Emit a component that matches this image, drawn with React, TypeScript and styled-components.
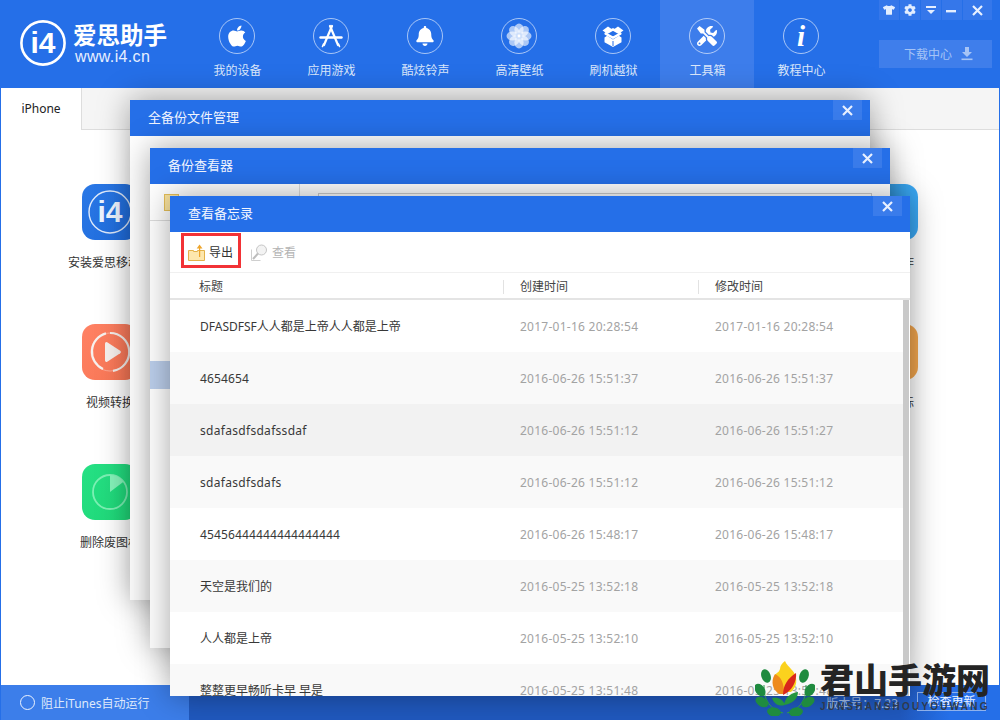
import React from "react";
import styled, { createGlobalStyle } from "styled-components";
import { FaApple, FaBell, FaTools, FaTshirt, FaCog } from "react-icons/fa";

const FONT = `"Noto Sans", "Noto Sans CJK SC", sans-serif`;
const BLUE = "#256fe8";

const Global = createGlobalStyle`
  html, body { margin: 0; padding: 0; background: #fff; }
  * { box-sizing: border-box; }
  body { font-family: ${FONT}; font-size: 12px; }
`;

const Page = styled.div`
  position: relative;
  width: 1000px;
  height: 720px;
  overflow: hidden;
  display: flex;
  flex-direction: column;
  background: #fff;
  border-left: 1px solid ${BLUE};
  border-right: 1px solid ${BLUE};
`;

const Header = styled.header`
  flex: none;
  height: 88px;
  margin: 0 -1px;
  display: flex;
  background: ${BLUE};
  color: #fff;
`;

const Logo = styled.div`
  width: 190px;
  flex: none;
  display: flex;
  align-items: center;
  gap: 7px;
  padding: 0 0 3px 20px;
`;
const LogoText = styled.div`
  display: flex;
  flex-direction: column;
`;
const LogoName = styled.div`
  font-size: 23.5px;
  line-height: 27px;
  font-weight: 700;
  white-space: nowrap;
`;
const LogoUrl = styled.div`
  font-family: "Liberation Sans", sans-serif;
  font-size: 16px;
  line-height: 15px;
  letter-spacing: 0.35px;
  padding-left: 2px;
  color: #e8f0ff;
`;

const NavItem = styled.div<{ $active?: boolean }>`
  width: 94px;
  flex: none;
  display: flex;
  flex-direction: column;
  align-items: center;
  padding-top: 18px;
  background: ${(p) => (p.$active ? "#3d7deb" : "transparent")};
`;
const NavCircle = styled.div`
  width: 36px;
  height: 36px;
  border-radius: 50%;
  border: 1px solid rgba(255, 255, 255, 0.6);
  display: flex;
  align-items: center;
  justify-content: center;
  font-size: 20px;
  color: #fff;
`;
const NavLabel = styled.div`
  margin-top: 9px;
  padding-left: 1px;
  line-height: 16px;
  font-size: 12px;
  color: #dbe7fb;
  white-space: nowrap;
`;
const InfoGlyph = styled.span`
  font-family: "Liberation Serif", serif;
  font-style: italic;
  font-weight: 700;
  font-size: 29px;
  line-height: 34px;
`;

const WindowArea = styled.div`
  margin-left: auto;
  padding-right: 8px;
  display: flex;
  flex-direction: column;
  align-items: stretch;
`;
const WindowButtons = styled.div`
  display: flex;
  gap: 1px;
`;
const WindowButton = styled.div<{ $wide?: boolean }>`
  width: ${(p) => (p.$wide ? 29 : 20)}px;
  height: 20px;
  background: #3577ea;
  display: flex;
  align-items: center;
  justify-content: center;
  font-size: 12px;
  color: #e4eeff;
`;
const DownloadButton = styled.div`
  margin-top: 20px;
  height: 28px;
  background: #3f7eeb;
  color: #a6c4f6;
  display: flex;
  align-items: center;
  justify-content: center;
  gap: 9px;
  font-size: 12px;
  padding-left: 6px;
`;

const TabStrip = styled.div`
  flex: none;
  height: 42px;
  background: #f5f5f5;
  border-bottom: 1px solid #dddddd;
  display: flex;
`;
const Tab = styled.div`
  width: 81px;
  height: 42px;
  background: #fff;
  border-right: 1px solid #dddddd;
  color: #222;
  font-size: 12px;
  text-align: center;
  line-height: 42px;
`;

const Main = styled.main`
  flex: 1;
  display: flex;
  justify-content: space-between;
  padding: 54px 49px 0;
`;
const ToolColumn = styled.div`
  width: 120px;
  display: flex;
  flex-direction: column;
`;
const Tool = styled.div`
  height: 140px;
  display: flex;
  flex-direction: column;
  align-items: center;
`;
const ToolTile = styled.div<{ $from: string; $to: string }>`
  width: 56px;
  height: 56px;
  border-radius: 13px;
  background: linear-gradient(135deg, ${(p) => p.$from}, ${(p) => p.$to});
  display: flex;
  align-items: center;
  justify-content: center;
`;
const ToolLabel = styled.div`
  margin-top: 13px;
  line-height: 20px;
  color: #333;
  font-size: 12px;
  white-space: nowrap;
`;

const Footer = styled.footer`
  flex: none;
  height: 35px;
  margin: 0 -1px;
  background: linear-gradient(90deg, #2059bf 0, #2059bf 90%, ${BLUE} 95%);
  display: flex;
  align-items: center;
  color: #fff;
  font-size: 12px;
`;
const ItunesToggle = styled.div`
  width: 189px;
  height: 35px;
  background: #3c7eea;
  display: flex;
  align-items: center;
  gap: 6px;
  padding-left: 20px;
  color: #dfe9fb;
`;
const ToggleRing = styled.span`
  width: 15px;
  height: 15px;
  border-radius: 50%;
  border: 1.5px solid #eef4ff;
`;
const Version = styled.div`
  margin-left: auto;
  color: #a9c2ea;
  white-space: nowrap;
`;
const UpdateButton = styled.div`
  margin: 0 14px 3px 19px;
  width: 69px;
  height: 19px;
  border: 1px solid #8fb2ec;
  color: #eef4ff;
  text-align: center;
  line-height: 18px;
`;

const Dialog = styled.section<{ $left: number; $top: number }>`
  position: absolute;
  left: ${(p) => p.$left - 1}px;
  top: ${(p) => p.$top}px;
  width: 740px;
  height: 500px;
  background: #fff;
  box-shadow: 0 0 30px rgba(0, 0, 0, 0.36);
  display: flex;
  flex-direction: column;
  overflow: visible;
`;
const DialogHead = styled.div`
  flex: none;
  height: 36px;
  background: ${BLUE};
  display: flex;
  justify-content: space-between;
  color: #f2f6ff;
  font-size: 13px;
  line-height: 35px;
  padding: 0 8px 0 18px;
`;
const CloseBox = styled.div`
  width: 29px;
  height: 20px;
  background: #3a7ceb;
  display: flex;
  align-items: center;
  justify-content: center;
`;

const ViewerBody = styled.div`
  flex: 1;
  display: flex;
  min-height: 0;
`;
const Sidebar = styled.div`
  width: 150px;
  flex: none;
  border-right: 1px solid #dddddd;
  display: flex;
  flex-direction: column;
`;
const SideRow = styled.div`
  height: 37px;
  padding: 10px 0 0 14px;
  border-bottom: 1px solid #dddddd;
`;
const SideSelected = styled.div`
  height: 28px;
  margin-top: 140px;
  background: #bccfec;
`;
const SearchBox = styled.div`
  margin: 9px 18px 0;
  flex: 1;
  height: 28px;
  border: 1px solid #cccccc;
`;

const Toolbar = styled.div`
  flex: none;
  height: 41px;
  border-bottom: 1px solid #f0f0f0;
  display: flex;
  align-items: flex-start;
  padding: 1px 0 0 11px;
  gap: 10px;
`;
const ToolButton = styled.div<{ $marked?: boolean; $off?: boolean }>`
  height: 35px;
  display: flex;
  align-items: center;
  gap: 4px;
  font-size: 12px;
  color: ${(p) => (p.$off ? "#b4b4b4" : "#333")};
  padding: 3px 5px 0 4px;
  border: 3px solid ${(p) => (p.$marked ? "#f23236" : "transparent")};
  margin-left: ${(p) => (p.$off ? "-7px" : "0")};
`;

const TableHead = styled.div`
  flex: none;
  height: 27px;
  display: grid;
  grid-template-columns: 333px 195px 1fr;
  border-bottom: 2px solid #e4e4e4;
  color: #444;
  font-size: 12px;
  align-items: center;
  padding-top: 2px;
`;
const HeadCell = styled.div<{ $first?: boolean }>`
  padding-left: ${(p) => (p.$first ? 29 : 16)}px;
  height: 14px;
  line-height: 14px;
  border-left: ${(p) => (p.$first ? "none" : "1px solid #e2e2e2")};
`;
const TableBody = styled.div`
  position: relative;
  flex: 1;
  min-height: 0;
  overflow: hidden;
`;
const Row = styled.div<{ $bg: string }>`
  height: 52px;
  display: grid;
  grid-template-columns: 334px 195px 1fr;
  align-items: center;
  background: ${(p) => p.$bg};
  font-size: 12px;
`;
const TitleCell = styled.div<{ $spacing: number }>`
  padding-left: 30px;
  color: #383838;
  letter-spacing: ${(p) => p.$spacing}px;
  white-space: nowrap;
`;
const DateCell = styled.div`
  padding-left: 16px;
  color: #a3a3a3;
  letter-spacing: 0.26px;
  white-space: nowrap;
`;
const ScrollThumb = styled.div`
  position: absolute;
  top: 0;
  right: 1px;
  bottom: 0;
  width: 6px;
  background: #c9c9c9;
`;
const ScrollGutter = styled.div`
  position: absolute;
  top: 0;
  right: 0;
  bottom: 0;
  width: 1px;
  background: #fff;
`;

const Watermark = styled.div`
  position: absolute;
  left: 754px;
  top: 660px;
  width: 240px;
  display: flex;
  gap: 5px;
`;
const WatermarkText = styled.div`
  display: flex;
  flex-direction: column;
`;
const WatermarkName = styled.div`
  font-family: "Noto Sans CJK SC", sans-serif;
  font-weight: 900;
  font-size: 34px;
  line-height: 38px;
  color: #242424;
  white-space: nowrap;
`;
const WatermarkPinyin = styled.div`
  margin-top: 3px;
  font-family: "Liberation Sans", sans-serif;
  font-weight: 700;
  font-size: 10px;
  line-height: 12px;
  letter-spacing: 2.2px;
  color: #2f3a4c;
  white-space: nowrap;
`;

const CloseIcon = () => (
  <svg width="11" height="11" viewBox="0 0 11 11">
    <path d="M1 1l9 9M10 1l-9 9" stroke="#e8f0ff" strokeWidth="2.2" fill="none" />
  </svg>
);

const AppStoreIcon = () => (
  <svg width="26" height="26" viewBox="0 0 26 26" fill="none" stroke="#fff" strokeLinecap="round">
    <path d="M14 3L6 22" strokeWidth="2.2" />
    <path d="M12 3l8 19" strokeWidth="2.2" />
    <path d="M2.5 14.5h21" strokeWidth="2.4" />
    <path d="M5.5 21l-1 2.5M20.5 21l1 2.5" strokeWidth="1.6" />
  </svg>
);

const FlowerIcon = () => (
  <svg width="26" height="26" viewBox="0 0 26 26">
    {[0, 45, 90, 135, 180, 225, 270, 315].map((a) => (
      <ellipse key={a} cx="13" cy="6.5" rx="4.6" ry="6" fill="#fff" opacity="0.62" transform={`rotate(${a} 13 13)`} />
    ))}
    <circle cx="13" cy="13" r="3.4" fill="#cfe0fb" />
    <circle cx="13" cy="13" r="1.4" fill="#fff" />
  </svg>
);

const BoxIcon = () => (
  <svg width="24" height="24" viewBox="0 0 24 24" fill="#fff">
    <path d="M12 6L7 2.5 1.5 6.5 6 9.6zM12 6l5-3.5 5.5 4L18 9.6z" />
    <path d="M12 5.4l7.4 4.2L12 13.8 4.6 9.6z" fill="none" stroke="#fff" strokeWidth="2.4" strokeLinejoin="round" />
    <path d="M3.5 13.4l2.6-1.6L12 15.6l5.9-3.8 2.6 1.6v4.8L12 23l-8.5-4.8z" />
    <path d="M12 17v5" stroke="#256fe8" strokeWidth="1" />
  </svg>
);

const MenuIcon = () => (
  <svg width="12" height="12" viewBox="0 0 12 12" fill="#e4eeff">
    <rect x="1" y="2" width="10" height="2" />
    <path d="M2 6h8L6 10z" />
  </svg>
);
const MinIcon = () => (
  <svg width="12" height="12" viewBox="0 0 12 12" fill="#e4eeff">
    <rect x="0" y="6" width="10" height="2.4" />
  </svg>
);
const DownArrow = () => (
  <svg width="12" height="14" viewBox="0 0 12 14" fill="#a6c4f6">
    <path d="M4 0h4v5h3L6 10 1 5h3z" />
    <rect x="0.5" y="11.5" width="11" height="1.6" />
  </svg>
);

const BrandMark = () => (
  <svg width="46" height="46" viewBox="0 0 46 46">
    <circle cx="23" cy="23" r="21.6" fill="none" stroke="#fff" strokeWidth="2.6" />
    <text x="23" y="33" textAnchor="middle" fontFamily="Liberation Sans" fontWeight="700" fontSize="30" fill="#fff">
      i4
    </text>
  </svg>
);

const TileBrand = () => (
  <svg width="46" height="46" viewBox="0 0 46 46">
    <circle cx="23" cy="23" r="21" fill="none" stroke="#fff" strokeWidth="1.4" opacity="0.85" />
    <text x="23" y="33" textAnchor="middle" fontFamily="Liberation Sans" fontWeight="700" fontSize="30" fill="#eef4ff">
      i4
    </text>
  </svg>
);
const TilePlay = () => (
  <svg width="42" height="42" viewBox="0 0 42 42" fill="none">
    <circle cx="21" cy="21" r="19" stroke="#fff" strokeOpacity="0.35" strokeWidth="1" />
    <path d="M21 2a19 19 0 0 1 3 37.8" stroke="#f7f1ee" strokeWidth="2.2" />
    <path d="M14 38A19 19 0 0 1 17 2.4" stroke="#f7f1ee" strokeWidth="2.2" />
    <path d="M16 12.5a1.5 1.5 0 0 1 2.2-1.2l13 8.4a1.6 1.6 0 0 1 0 2.6l-13 8.4a1.5 1.5 0 0 1-2.2-1.2z" fill="#f7f1ee" />
  </svg>
);
const TilePie = () => (
  <svg width="38" height="38" viewBox="0 0 38 38" fill="none">
    <circle cx="19" cy="19" r="17" stroke="#7cf0b4" strokeWidth="1.8" />
    <path d="M19 19V2a17 17 0 0 1 13.5 6.7z" fill="#86f5bb" />
  </svg>
);
const ExportIcon = () => (
  <svg width="17" height="17" viewBox="0 0 17 17">
    <path d="M.5 6.5h5v1h4v-1h7v10H.5z" fill="#fde7ad" stroke="#e3b24a" />
    <path d="M11 13V4.5H8.7L11.5.6l3 3.9H12.2V13z" fill="#eea52c" />
  </svg>
);
const ViewIcon = () => (
  <svg width="17" height="17" viewBox="0 0 17 17" fill="none">
    <path d="M.5 5.5v11h9" stroke="#cfcfcf" />
    <circle cx="10.5" cy="6" r="5" fill="#f3f3f3" stroke="#c6c6c6" />
    <path d="M7 9.5L2 15" stroke="#bdbdbd" strokeWidth="2" />
  </svg>
);
const FolderIcon = () => (
  <svg width="15" height="17" viewBox="0 0 15 17">
    <rect x="0.5" y="0.5" width="14" height="16" fill="#fbe49f" stroke="#e6c05a" />
  </svg>
);
const FlameMark = () => (
  <svg width="60" height="56" viewBox="0 0 60 56">
    <path d="M28 53C16 50 8 40 9 25" stroke="#2f9a4a" strokeWidth="1" fill="none" />
    <path d="M32 53c12-3 20-13 19-28" stroke="#2f9a4a" strokeWidth="1" fill="none" />
    {[
      [11, 16, -20],
      [5, 30, -35],
      [7, 42, -60],
      [19, 52, -80],
      [49, 16, 20],
      [55, 30, 35],
      [53, 42, 60],
      [41, 52, 80],
    ].map(([x, y, r]) => (
      <ellipse key={`${x}-${y}`} cx={x} cy={y} rx="4.6" ry="7" fill="#1f8b3f" transform={`rotate(${r} ${x} ${y})`} />
    ))}
    <path d="M30 1c3 7 10 9 11 17 1 6-1 10-5 14H24c-5-4-7-9-5-15 1-4 5-4 6-8 0-3 2-6 5-8z" fill="#fbd21e" />
    <path d="M20 14c6 3 9 8 9 20h-5c-6-4-9-12-4-20z" fill="#ee8a1c" />
    <path d="M41 13c1 8-4 18-13 22 0-10 5-17 13-22z" fill="#d9261c" />
    <path d="M17 38c6-1 11 1 13 7-6 2-11-1-13-7zM43 32c0 7-6 12-14 13 1-7 6-12 14-13z" fill="#25963f" />
  </svg>
);

const navItems: { label: string; icon: React.ReactNode; active?: boolean }[] = [
  { label: "我的设备", icon: <FaApple size={24} /> },
  { label: "应用游戏", icon: <AppStoreIcon /> },
  { label: "酷炫铃声", icon: <FaBell size={20} /> },
  { label: "高清壁纸", icon: <FlowerIcon /> },
  { label: "刷机越狱", icon: <BoxIcon /> },
  { label: "工具箱", icon: <FaTools size={20} />, active: true },
  { label: "教程中心", icon: <InfoGlyph>i</InfoGlyph> },
];

const rows = [
  ["DFASDFSF人人都是上帝人人都是上帝", "2017-01-16 20:28:54", "2017-01-16 20:28:54", "#ffffff"],
  ["4654654", "2016-06-26 15:51:37", "2016-06-26 15:51:37", "#f9f9f9"],
  ["sdafasdfsdafssdaf", "2016-06-26 15:51:12", "2016-06-26 15:51:27", "#f2f2f2"],
  ["sdafasdfsdafs", "2016-06-26 15:51:12", "2016-06-26 15:51:12", "#f9f9f9"],
  ["45456444444444444444", "2016-06-26 15:48:17", "2016-06-26 15:48:17", "#ffffff"],
  ["天空是我们的", "2016-05-25 13:52:18", "2016-05-25 13:52:18", "#f9f9f9"],
  ["人人都是上帝", "2016-05-25 13:52:10", "2016-05-25 13:52:10", "#ffffff"],
  ["整整更早畅听卡早 早是", "2016-05-25 13:51:48", "2016-05-25 13:51:48", "#f9f9f9"],
];

const titleSpacing = (t: string) => (/^\d+$/.test(t) ? 0.14 : /^[a-z]+$/.test(t) ? 0.3 : 0);

export default function App() {
  return (
    <Page>
      <Global />
      <Header>
        <Logo>
          <BrandMark />
          <LogoText>
            <LogoName>爱思助手</LogoName>
            <LogoUrl>www.i4.cn</LogoUrl>
          </LogoText>
        </Logo>
        {navItems.map((n) => (
          <NavItem key={n.label} $active={n.active}>
            <NavCircle>{n.icon}</NavCircle>
            <NavLabel>{n.label}</NavLabel>
          </NavItem>
        ))}
        <WindowArea>
          <WindowButtons>
            <WindowButton>
              <FaTshirt />
            </WindowButton>
            <WindowButton>
              <FaCog />
            </WindowButton>
            <WindowButton>
              <MenuIcon />
            </WindowButton>
            <WindowButton>
              <MinIcon />
            </WindowButton>
            <WindowButton $wide>
              <CloseIcon />
            </WindowButton>
          </WindowButtons>
          <DownloadButton>
            下载中心
            <DownArrow />
          </DownloadButton>
        </WindowArea>
      </Header>
      <TabStrip>
        <Tab>iPhone</Tab>
      </TabStrip>
      <Main>
        <ToolColumn>
          <Tool>
            <ToolTile $from="#2a78e6" $to="#1f6cdc">
              <TileBrand />
            </ToolTile>
            <ToolLabel>安装爱思移动端</ToolLabel>
          </Tool>
          <Tool>
            <ToolTile $from="#ff8164" $to="#f87654">
              <TilePlay />
            </ToolTile>
            <ToolLabel>视频转换</ToolLabel>
          </Tool>
          <Tool>
            <ToolTile $from="#25e084" $to="#1fd878">
              <TilePie />
            </ToolTile>
            <ToolLabel>删除废图标</ToolLabel>
          </Tool>
        </ToolColumn>
        <ToolColumn>
          <Tool>
            <ToolTile $from="#3aa9f6" $to="#3aa9f6" />
            <ToolLabel>铃声制作</ToolLabel>
          </Tool>
          <Tool>
            <ToolTile $from="#f2a64e" $to="#f2a64e" />
            <ToolLabel>清理图标</ToolLabel>
          </Tool>
        </ToolColumn>
      </Main>
      <Footer>
        <ItunesToggle>
          <ToggleRing />
          阻止iTunes自动运行
        </ItunesToggle>
        <Version>版本号：7.23</Version>
        <UpdateButton>检查更新</UpdateButton>
      </Footer>

      <Dialog $left={130} $top={100}>
        <DialogHead>
          全备份文件管理
          <CloseBox>
            <CloseIcon />
          </CloseBox>
        </DialogHead>
      </Dialog>

      <Dialog $left={150} $top={148}>
        <DialogHead>
          备份查看器
          <CloseBox>
            <CloseIcon />
          </CloseBox>
        </DialogHead>
        <ViewerBody>
          <Sidebar>
            <SideRow>
              <FolderIcon />
            </SideRow>
            <SideSelected />
          </Sidebar>
          <SearchBox />
        </ViewerBody>
      </Dialog>

      <Dialog $left={170} $top={196}>
        <DialogHead>
          查看备忘录
          <CloseBox>
            <CloseIcon />
          </CloseBox>
        </DialogHead>
        <Toolbar>
          <ToolButton $marked>
            <ExportIcon />
            导出
          </ToolButton>
          <ToolButton $off>
            <ViewIcon />
            查看
          </ToolButton>
        </Toolbar>
        <TableHead>
          <HeadCell $first>标题</HeadCell>
          <HeadCell>创建时间</HeadCell>
          <HeadCell>修改时间</HeadCell>
        </TableHead>
        <TableBody>
          {rows.map((r) => (
            <Row key={r[0]} $bg={r[3]}>
              <TitleCell $spacing={titleSpacing(r[0])}>{r[0]}</TitleCell>
              <DateCell>{r[1]}</DateCell>
              <DateCell>{r[2]}</DateCell>
            </Row>
          ))}
          <ScrollThumb />
          <ScrollGutter />
        </TableBody>
      </Dialog>

      <Watermark>
        <FlameMark />
        <WatermarkText>
          <WatermarkName>君山手游网</WatermarkName>
          <WatermarkPinyin>JUNSHANSHOUYOUWANG</WatermarkPinyin>
        </WatermarkText>
      </Watermark>
    </Page>
  );
}
